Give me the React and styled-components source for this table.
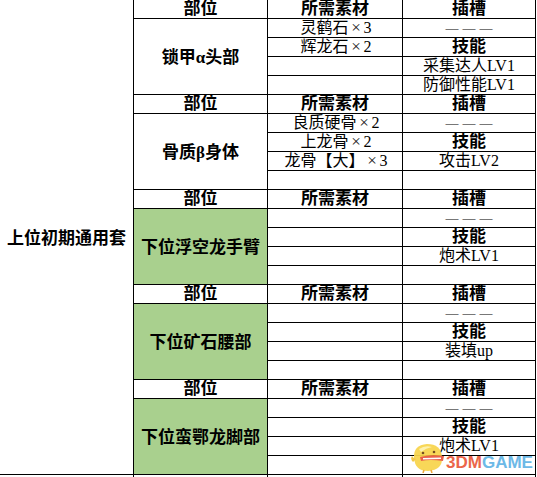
import React from 'react'
import styled, { createGlobalStyle } from 'styled-components'

const GlobalStyle = createGlobalStyle`
  html, body {
    margin: 0;
    padding: 0;
    background: #ffffff;
  }
  body {
    font-family: "Liberation Serif", "Noto Sans CJK SC", serif;
    color: #000000;
  }
`

const Page = styled.div`
  position: relative;
  width: 537px;
  height: 477px;
  overflow: hidden;
  background: #ffffff;
`

const Sheet = styled.div`
  display: grid;
  grid-template-columns: 133px 133px 134px 132px;
  grid-auto-rows: 18px;
  gap: 1px;
  width: 536px;
  padding-right: 1px;
  box-sizing: border-box;
  background: #000000;
`

const Cell = styled.div`
  display: flex;
  align-items: center;
  justify-content: center;
  background: ${p => (p.$green ? '#a9d08e' : '#ffffff')};
  white-space: nowrap;
  overflow: hidden;
  font-size: ${p => (p.$bold ? '17px' : '16px')};
  font-weight: ${p => (p.$bold ? 700 : 400)};
  line-height: 18px;
`

const SetName = styled(Cell)`
  grid-column: 1;
  grid-row: 1 / span 25;
  font-size: 17px;
  font-weight: 700;
  padding-top: 4px;
`

const PartName = styled(Cell)`
  grid-column: 2;
  grid-row: span 4;
  font-size: 17px;
  font-weight: 700;
  padding-top: 2px;
`

const Header = styled(Cell)`
  grid-column: ${p => p.$col};
  font-size: 17px;
  font-weight: 700;
`

const Material = styled(Cell)`
  grid-column: 3;
  padding-left: 2px;
`

const Slot = styled(Cell)`
  grid-column: 4;
`

const Cross = styled.span`
  display: inline-block;
  width: 15px;
  text-align: center;
  font-size: 17px;
  font-weight: 300;
  color: #222222;
`

const Dashes = styled.span`
  font-size: 13px;
  letter-spacing: 4px;
  margin-right: -4px;
  padding-bottom: 1px;
`

const Tail = styled.div`
  background: #ffffff;
  height: 2px;
`

const Watermark = styled.div`
  position: absolute;
  left: 410px;
  top: 442px;
  display: flex;
  align-items: flex-end;
  opacity: 0.93;
`

const Logo = styled.span`
  font-family: "Liberation Sans", Arial, sans-serif;
  font-size: 17px;
  font-weight: 700;
  line-height: 18px;
  margin-bottom: 1px;
  color: ${p => p.$color};
`

const blocks = [
  {
    part: '锁甲α头部',
    rows: [['灵鹤石×3', '———'], ['辉龙石×2', '技能'], ['', '采集达人LV1'], ['', '防御性能LV1']],
  },
  {
    part: '骨质β身体',
    rows: [['良质硬骨×2', '———'], ['上龙骨×2', '技能'], ['龙骨【大】×3', '攻击LV2'], ['', '']],
  },
  {
    part: '下位浮空龙手臂',
    green: true,
    rows: [['', '———'], ['', '技能'], ['', '炮术LV1'], ['', '']],
  },
  {
    part: '下位矿石腰部',
    green: true,
    rows: [['', '———'], ['', '技能'], ['', '装填up'], ['', '']],
  },
  {
    part: '下位蛮鄂龙脚部',
    green: true,
    rows: [['', '———'], ['', '技能'], ['', '炮术LV1'], ['', '']],
  },
]

// the "×" is full width in the sheet, so it gets its own box
const renderMaterial = text => {
  if (!text.includes('×')) return text
  const [name, count] = text.split('×')
  return (
    <>
      {name}
      <Cross>×</Cross>
      {count}
    </>
  )
}

const renderSlot = text => {
  if (text === '———') return <Dashes>{text}</Dashes>
  return text
}

const Chick = () => (
  <svg width="36" height="31" viewBox="0 0 36 31">
    <path d="M4 16 Q3 3 17 2 Q31 2 32 15 Q33 28 18 29 Q5 29 4 16 Z" fill="#f8d54c" />
    <path d="M9 7 Q15 3 22 5 Q16 6 11 10 Z" fill="#fdf0a8" />
    <path d="M3 20 Q0 17 2 14 Q4 17 6 17 Z" fill="#f3c43a" />
    <path d="M10 15 Q20 12 34 14 L33 19 Q20 17 11 19 Z" fill="#e9553c" />
    <path d="M13 16 L31 15.5 L31 17 L13 17.5 Z" fill="#ffffff" />
    <circle cx="13" cy="11" r="1.3" fill="#6b4012" />
    <circle cx="24" cy="10" r="1.3" fill="#6b4012" />
    <path d="M14 28 L13 31 M21 28 L22 31" stroke="#f0a02c" strokeWidth="1.5" />
  </svg>
)

const App = () => {
  return (
    <Page>
      <GlobalStyle />
      <Sheet>
        <SetName>上位初期通用套</SetName>
        {blocks.map(block => (
          <React.Fragment key={block.part}>
            <Header $col={2}>部位</Header>
            <Header $col={3}>所需素材</Header>
            <Header $col={4}>插槽</Header>
            <PartName $green={block.green}>{block.part}</PartName>
            {block.rows.map(([mat, slot], i) => (
              <React.Fragment key={i}>
                <Material>{renderMaterial(mat)}</Material>
                <Slot $bold={slot === '技能'}>{renderSlot(slot)}</Slot>
              </React.Fragment>
            ))}
          </React.Fragment>
        ))}
        <Tail />
        <Tail />
        <Tail />
        <Tail />
      </Sheet>
      <Watermark>
        <Chick />
        <Logo $color="#ea5a3c">3DM</Logo>
        <Logo $color="#62b4e6">GAME</Logo>
      </Watermark>
    </Page>
  )
}

export default App
